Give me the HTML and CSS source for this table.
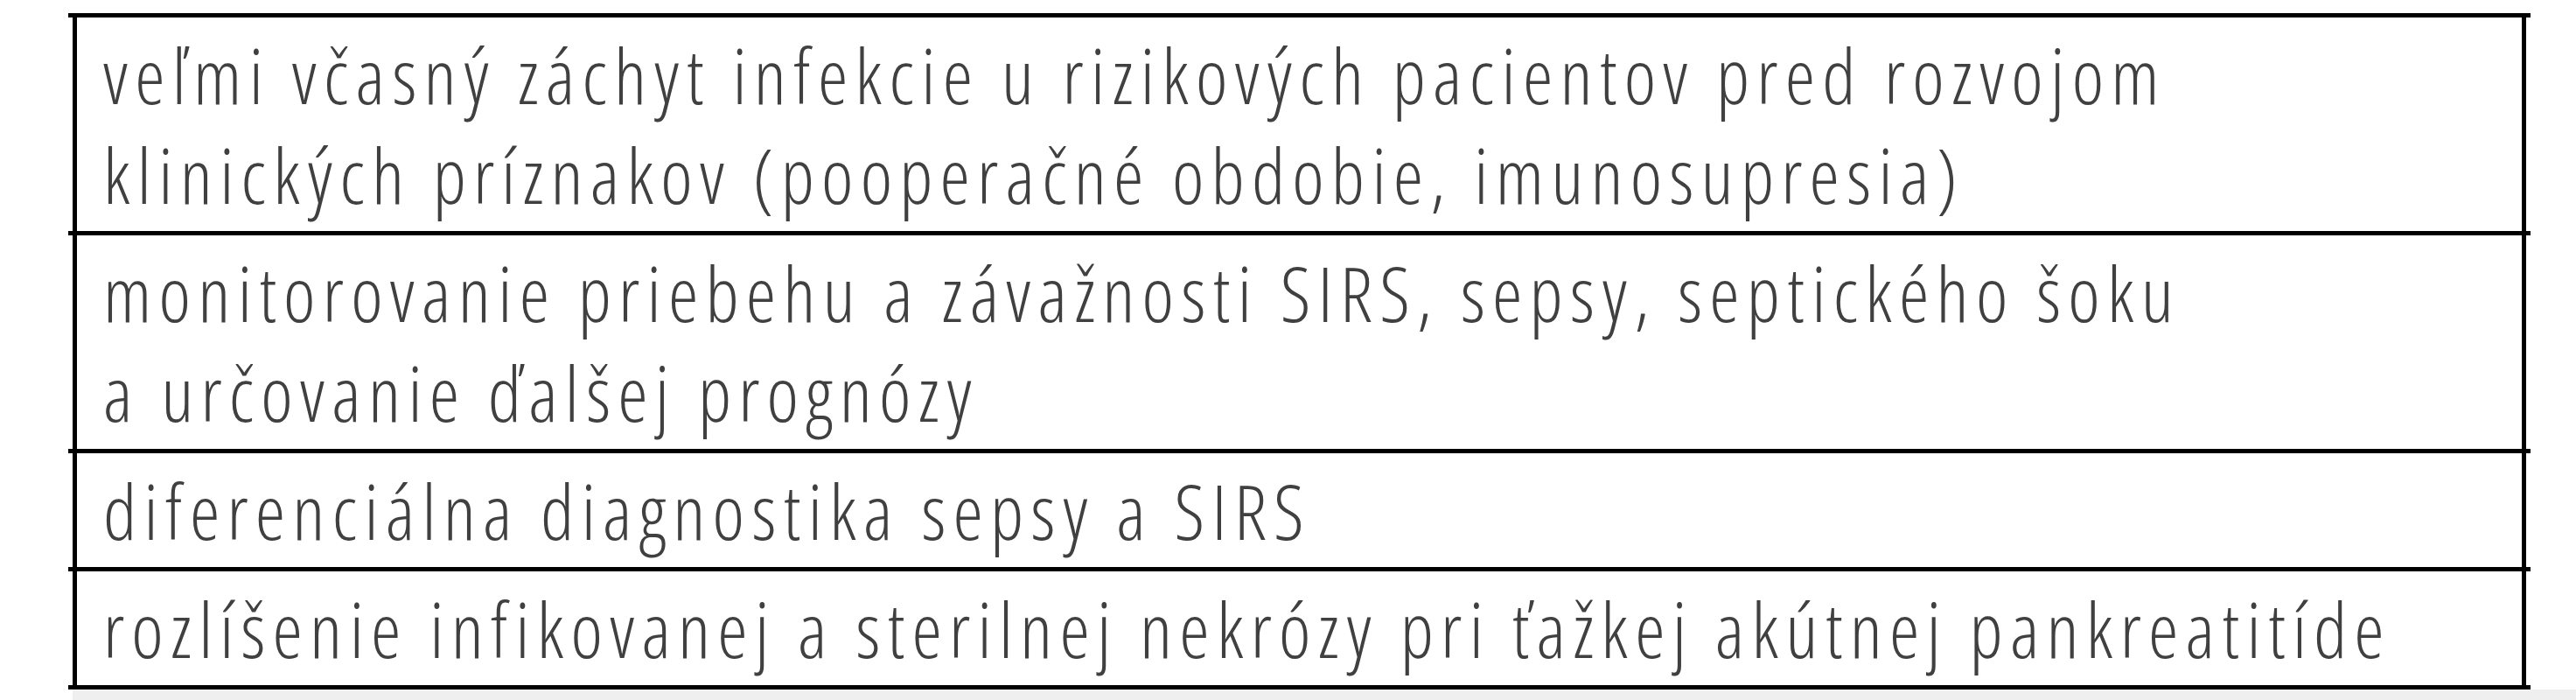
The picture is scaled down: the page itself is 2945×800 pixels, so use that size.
FILE: index.html
```html
<!DOCTYPE html>
<html lang="sk">
<head>
<meta charset="utf-8">
<title>Tabuľka</title>
<link rel="stylesheet" href="styles.css">
</head>
<body>
<div class="page">
  <div class="table">
    <div class="row"><div class="cell">veľmi včasný záchyt infekcie u rizikových pacientov pred rozvojom<br>klinických príznakov (pooperačné obdobie, imunosupresia)</div></div>
    <div class="row"><div class="cell">monitorovanie priebehu a závažnosti SIRS, sepsy, septického šoku<br>a určovanie ďalšej prognózy</div></div>
    <div class="row"><div class="cell">diferenciálna diagnostika sepsy a SIRS</div></div>
    <div class="row last"><div class="cell">rozlíšenie infikovanej a sterilnej nekrózy pri ťažkej akútnej pankreatitíde</div></div>
  </div>
  <div class="footer-band"></div>
</div>
</body>
</html>
```

FILE: styles.css
```css
html, body {
  margin: 0;
  padding: 0;
  background: #ffffff;
}
.page {
  width: 2945px;
  height: 800px;
  padding-top: 15px;
  box-sizing: border-box;
  display: flex;
  flex-direction: column;
}
.table {
  margin-left: 78px;
  width: 2815px;
  display: flex;
  flex-direction: column;
}
.row {
  border-top: 5px solid #000;
}
.row.last {
  border-bottom: 5px solid #000;
}
.cell {
  margin: 0 5px;
  border-left: 5px solid #000;
  border-right: 5px solid #000;
  padding: 8px 20px 8px 30px;
  font-family: "Open Sans", "Noto Sans", sans-serif;
  font-weight: 300;
  font-stretch: 80%;
  font-size: 87px;
  letter-spacing: 8.2px;
  line-height: 114px;
  color: #404040;
  white-space: nowrap;
}
.footer-band {
  flex: 1;
  margin-left: 83px;
  background: #efefef;
}
```
